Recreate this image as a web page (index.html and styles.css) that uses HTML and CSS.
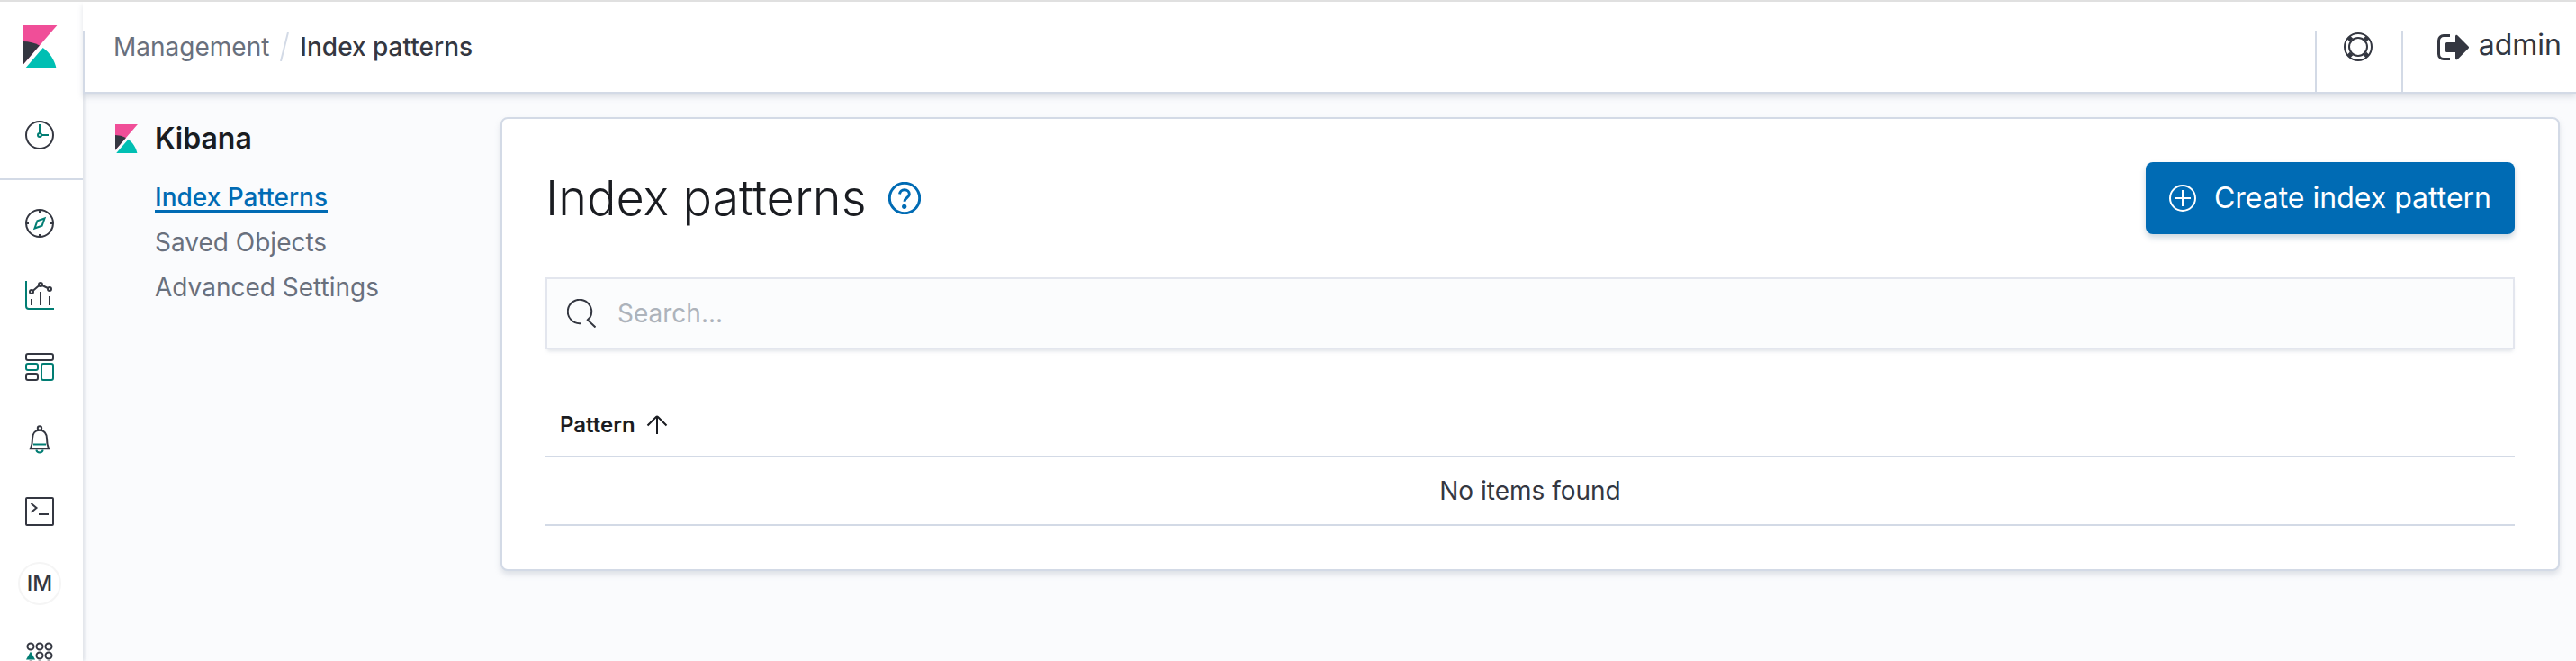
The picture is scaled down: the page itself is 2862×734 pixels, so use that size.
FILE: index.html
```html
<!DOCTYPE html>
<html lang="en">
<head>
    <meta charset="UTF-8">
    <title>Index patterns - Kibana</title>

    <link rel="stylesheet" href="styles.css">
</head>
<body>

<!-- shared shapes -->
<svg class="sprite" aria-hidden="true">
    <symbol id="logo" viewBox="0 0 32 32">
        <path fill="#f04e98" d="M4 0v28.789L28.935.017z"/>
        <path fill="#343741" d="M4 12v16.789l11.906-13.738A24.721 24.721 0 0 0 4 12"/>
        <path fill="#00bfb3" d="M18.479 16.664L6.268 30.754l-1.073 1.237h23.191c-1.252-6.292-4.883-11.719-9.907-15.327"/>
    </symbol>
</svg>

<div class="app">
    <aside class="side">
        <a class="brand" href="#" aria-label="Kibana home">
            <svg class="brand-logo"><use href="#logo"/></svg>
        </a>
        <nav class="apps" aria-label="Applications">
            <div class="recent">
                <a class="app-link" href="#" aria-label="Recently viewed">
                    <svg class="icon" viewBox="0 0 32 32">
                        <circle cx="16" cy="16" r="15"/>
                        <path class="accent" d="M16 4v10M18 16h8"/>
                        <circle class="accent" cx="16" cy="16" r="2"/>
                    </svg>
                </a>
            </div>
            <a class="app-link" href="#" aria-label="Discover">
                <svg class="icon" viewBox="0 0 32 32">
                    <circle cx="16" cy="16" r="15"/>
                    <path d="M16 1v3M16 28v3M1 16h3M28 16h3"/>
                    <path class="accent" d="M21.5 10.500L13.400 13.400 10.500 21.500 18.600 18.600z"/>
                </svg>
            </a>
            <a class="app-link" href="#" aria-label="Visualize">
                <svg class="icon" viewBox="0 0 32 32">
                    <path class="accent" d="M1 0v28a3 3 0 0 0 3 3h28"/>
                    <path d="M7 20v7M17 12v15M27 17v10M8.800 10.700L15.200 5.300M19 5l6 3"/>
                    <circle cx="7" cy="12" r="2"/>
                    <circle cx="17" cy="4" r="2"/>
                    <circle cx="27" cy="9" r="2"/>
                </svg>
            </a>
            <a class="app-link" href="#" aria-label="Dashboard">
                <svg class="icon" viewBox="0 0 32 32">
                    <rect x="1" y="1" width="30" height="7" rx="2"/>
                    <rect x="1" y="23" width="13" height="7" rx="2"/>
                    <rect class="accent" x="1" y="12" width="13" height="7" rx="2"/>
                    <rect class="accent" x="18" y="12" width="13" height="18" rx="2"/>
                </svg>
            </a>
            <a class="app-link" href="#" aria-label="Alerting">
                <svg class="icon" viewBox="0 0 32 32">
                    <circle cx="16" cy="3.500" r="2.200"/>
                    <path d="M6 26.200h20c-1.300-3-2-6.500-2-11.200 0-5.500-3-9.300-8-9.300s-8 3.800-8 9.300c0 4.700-.7 8.200-2 11.200z"/>
                    <path class="accent" d="M9 21.600h14M12.300 27.500c.4 1.800 1.800 3 3.700 3s3.300-1.200 3.700-3"/>
                </svg>
            </a>
            <a class="app-link" href="#" aria-label="Dev tools">
                <svg class="icon" viewBox="0 0 32 32">
                    <rect x="1" y="1" width="30" height="30" rx="1"/>
                    <path d="M6.500 7l6 5-6 5M15 19h11"/>
                </svg>
            </a>
            <a class="app-link" href="#" aria-label="Index management">
                <span class="initials">IM</span>
            </a>
            <a class="app-link" href="#" aria-label="All applications">
                <svg class="icon" viewBox="0 0 32 32">
                    <circle cx="6" cy="6" r="3.500"/>
                    <circle cx="16" cy="6" r="3.500"/>
                    <circle cx="26" cy="6" r="3.500"/>
                    <path class="solid" d="M6 11.500l5 9H1z"/>
                    <circle cx="16" cy="16" r="3.500"/>
                    <circle cx="26" cy="16" r="3.500"/>
                    <circle cx="6" cy="26" r="3.500"/>
                    <circle cx="16" cy="26" r="3.500"/>
                    <circle cx="26" cy="26" r="3.500"/>
                </svg>
            </a>
        </nav>
    </aside>

    <div class="page">
        <header class="header">
            <nav class="crumbs" aria-label="Breadcrumb">
                <a class="crumb" href="#">Management</a>
                <svg class="slash" viewBox="0 0 10 32"><path d="M9 0L1 32"/></svg>
                <span class="crumb-current">Index patterns</span>
            </nav>
            <button class="help" type="button" aria-label="Help">
                <svg class="icon" viewBox="0 0 32 32">
                    <circle cx="16" cy="16" r="15"/>
                    <circle cx="16" cy="16" r="10"/>
                    <path class="straps" d="M8.500 8.500l-3-3M23.500 8.500l3-3M8.500 23.500l-3 3M23.500 23.500l3 3"/>
                </svg>
            </button>
            <a class="user" href="#">
                <svg class="exit" viewBox="0 0 36 30">
                    <path class="exit-door" d="M14 1.500H7A5.500 5.500 0 0 0 1.500 7v15A5.500 5.500 0 0 0 7 27.500h7"/>
                    <path class="exit-arrow" d="M10.500 9H20V2.500c0-1.600 1.500-2.200 2.600-1.100L34.500 13.500c.7.700.7 1.500 0 2.200L22.600 27.800c-1.100 1.100-2.600.5-2.600-1.100V20h-9.500A1.500 1.500 0 0 1 9 18.500v-8A1.500 1.500 0 0 1 10.500 9z"/>
                </svg>
                admin
            </a>
        </header>

        <div class="body">
            <nav class="menu" aria-label="Management">
                <h2 class="menu-title">
                    <svg class="menu-logo"><use href="#logo"/></svg>
                    Kibana
                </h2>
                <ul class="menu-list">
                    <li><a class="menu-link active" href="#">Index Patterns</a></li>
                    <li><a class="menu-link" href="#">Saved Objects</a></li>
                    <li><a class="menu-link" href="#">Advanced Settings</a></li>
                </ul>
            </nav>

            <main class="panel">
                <div class="panel-head">
                    <h1>Index patterns</h1>
                    <button class="about" type="button" aria-label="About index patterns">
                        <svg viewBox="0 0 36 36">
                            <circle cx="18" cy="18" r="16.700"/>
                            <path d="M12.500 13.500c.3-2.700 2.500-4.700 5.400-4.700 3.100 0 5.400 2 5.400 4.800 0 4.200-5.300 3.700-5.300 8.200"/>
                            <circle class="dot" cx="17.700" cy="27.300" r="2.600"/>
                        </svg>
                    </button>
                    <button class="create" type="button">
                        <svg viewBox="0 0 30 30">
                            <circle cx="15" cy="15" r="14"/>
                            <path d="M15 6v18M6 15h18"/>
                        </svg>
                        Create index pattern
                    </button>
                </div>

                <label class="search">
                    <svg class="icon" viewBox="0 0 32 32">
                        <path d="M15 27.200A13.200 13.200 0 1 1 25.500 20.500L22.800 23.300 31.500 31.500"/>
                    </svg>
                    <input type="search" placeholder="Search..." aria-label="Search">
                </label>

                <table class="patterns">
                    <thead>
                    <tr>
                        <th aria-sort="ascending">
                            <button class="sort" type="button">
                                Pattern
                                <svg viewBox="0 0 24 24"><path d="M12 22V3M1.500 12.500L11 3q1-1 2 0l9.500 9.500"/></svg>
                            </button>
                        </th>
                    </tr>
                    </thead>
                    <tbody>
                    <tr>
                        <td>No items found</td>
                    </tr>
                    </tbody>
                </table>
            </main>
        </div>
    </div>
</div>

</body>
</html>
```
FILE: styles.css
```css
* {
    margin: 0;
    padding: 0;
    box-sizing: border-box;
}

body {
    height: 100vh;
    overflow: hidden;
    border-top: 2px solid #e0e0e0;
    background: #fafbfd;
    color: #343741;
    font: 28px/36px Inter, "Liberation Sans", sans-serif;
}

a {
    color: inherit;
    text-decoration: none;
}

button {
    border: 0;
    background: none;
    color: inherit;
    font: inherit;
    cursor: pointer;
}

ul {
    list-style-type: none;
}

svg {
    flex: none;
    fill: none;
    stroke-width: 2;
}

.sprite {
    display: none;
}

.icon {
    width: 32px;
    height: 32px;
    stroke: #343741;
}

.icon .accent {
    stroke: #017d73;
}

.icon .solid {
    fill: #017d73;
    stroke: none;
}

.icon .straps {
    stroke-width: 5;
}

.app {
    display: flex;
    height: 100%;
}

/* left bar */
.side {
    flex: none;
    width: 92px;
    background: #fff;
    box-shadow: 2px 0 4px rgba(152, 162, 179, .3);
}

.brand {
    display: flex;
    align-items: center;
    justify-content: center;
    height: 100px;
    padding-right: 4px;
}

.brand-logo {
    width: 48px;
    height: 48px;
}

.recent {
    margin-bottom: 8px;
    padding: 8px 0;
    border-bottom: 2px solid #d3dae6;
}

.app-link {
    display: flex;
    align-items: center;
    justify-content: center;
    height: 80px;
    padding-right: 4px;
}

.initials {
    width: 48px;
    height: 48px;
    border: 2px solid #f5f5f5;
    border-radius: 50%;
    font-size: 24px;
    font-weight: 500;
    line-height: 44px;
    text-align: center;
}

/* top bar */
.page {
    position: relative;
    display: flex;
    flex: 1;
    flex-direction: column;
    min-width: 0;
}

.header {
    display: flex;
    padding-top: 32px;
    border-bottom: 2px solid #d3dae6;
    background: #fff;
    box-shadow: 0 4px 6px rgba(152, 162, 179, .3);
}

.crumbs {
    display: flex;
    flex: 1;
    align-items: flex-start;
    gap: 12px;
    height: 68px;
    padding-left: 32px;
    border-left: 2px solid #d3dae6;
}

.crumb {
    color: #69707d;
}

.crumb-current {
    font-weight: 500;
}

.slash {
    width: 10px;
    height: 32px;
    margin-top: 2px;
    stroke: #d3dae6;
}

.help,
.user {
    display: flex;
    align-items: flex-start;
    border-left: 2px solid #d3dae6;
}

.help {
    padding: 2px 32px 0 30px;
}

.user {
    gap: 10px;
    padding: 0 16px 0 38px;
    font-size: 32px;
    line-height: 32px;
}

.exit {
    width: 36px;
    height: 30px;
    margin-top: 4px;
}

.exit-door {
    stroke: #343741;
    stroke-width: 3;
}

.exit-arrow {
    fill: #343741;
}

/* management menu */
.body {
    display: flex;
    align-items: flex-start;
    padding: 26px 18px 32px 32px;
}

.menu {
    flex: none;
    width: 432px;
    padding-top: 6px;
}

.menu-title {
    display: flex;
    align-items: center;
    gap: 16px;
    color: #1a1c21;
    font-size: 32px;
    font-weight: 600;
    line-height: 36px;
}

.menu-logo {
    width: 32px;
    height: 32px;
}

.menu-list {
    padding: 22px 0 0 48px;
}

.menu-list li {
    line-height: 50px;
}

.menu-link {
    color: #69707d;
}

.menu-link.active {
    color: #006bb4;
    font-weight: 500;
    text-decoration: underline;
    text-decoration-thickness: 3px;
    text-underline-offset: 4px;
    text-decoration-skip-ink: none;
}

/* content */
.panel {
    flex: 1;
    padding: 48px;
    border: 2px solid #d3dae6;
    border-radius: 8px;
    background: #fff;
    box-shadow: 0 4px 6px rgba(152, 162, 179, .3);
}

.panel-head {
    display: flex;
    align-items: center;
    margin-bottom: 48px;
}

.panel-head h1 {
    color: #1a1c21;
    font-size: 54px;
    font-weight: 300;
    line-height: 80px;
}

.about {
    margin-left: 24px;
    line-height: 0;
}

.about svg {
    width: 36px;
    height: 36px;
    stroke: #006bb4;
    stroke-width: 3;
}

.about .dot {
    fill: #006bb4;
    stroke: none;
}

.create {
    display: flex;
    align-items: center;
    gap: 20px;
    height: 80px;
    margin-left: auto;
    padding: 0 26px;
    border-radius: 8px;
    background: #006bb4;
    box-shadow: 0 4px 6px rgba(54, 97, 126, .25);
    color: #fff;
    font-size: 32px;
}

.create svg {
    width: 30px;
    height: 30px;
    stroke: #fff;
}

.search {
    display: flex;
    align-items: center;
    gap: 24px;
    height: 80px;
    padding: 0 22px;
    border: 2px solid #e3e6ee;
    background: #fbfcfd;
    box-shadow: 0 4px 4px -2px rgba(152, 162, 179, .3);
}

.search input {
    flex: 1;
    border: 0;
    outline: 0;
    background: none;
    color: #343741;
    font: inherit;
}

.search input::placeholder {
    color: #adb3bb;
}

.patterns {
    width: 100%;
    margin-top: 62px;
    border-collapse: collapse;
}

.patterns th,
.patterns td {
    border-bottom: 2px solid #d3dae6;
}

.patterns th {
    padding: 4px 16px 16px;
    text-align: left;
}

.patterns td {
    height: 76px;
    text-align: center;
}

.sort {
    display: flex;
    align-items: center;
    gap: 12px;
    color: #1a1c21;
    font-size: 24px;
    font-weight: 600;
}

.sort svg {
    width: 24px;
    height: 24px;
    stroke: #1a1c21;
}
```
